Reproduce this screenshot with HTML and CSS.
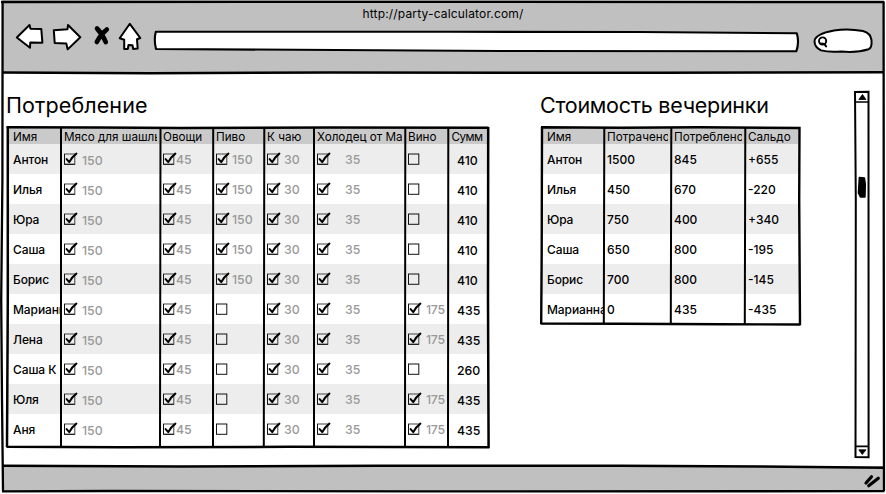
FILE: index.html
```html
<!DOCTYPE html>
<html lang="ru">
<head>
<meta charset="utf-8">
<title>Party calculator</title>
<link rel="stylesheet" href="styles.css">
</head>
<body>
<svg width="0" height="0" class="defs"><defs>
<symbol id="off" viewBox="0 0 15 14"><rect x=".5" y="2" width="10.3" height="10.3" fill="none" stroke="#111" stroke-width="1"/></symbol>
<symbol id="on" viewBox="0 0 15 14"><rect x=".5" y="2" width="10.3" height="10.3" fill="none" stroke="#444" stroke-width="1"/><path d="M.5 2V12.3H10.8" fill="none" stroke="#111"/><path d="M2.6 7.1L5.3 10.1Q8 4.8 12.4 1.6" fill="none" stroke="#000" stroke-width="2" stroke-linecap="round" stroke-linejoin="round"/></symbol>
</defs></svg>
<div class="browser">
  <header class="chrome">
    <div class="url">http://party-calculator.com/</div>
    <div class="toolbar">
      <svg class="nav" width="140" height="32" viewBox="8 20 140 32" fill="#fff" stroke="#000" stroke-width="2" stroke-linejoin="round">
        <path d="M16.8 37.5L29.5 25L30.5 28.8L41.3 29L42.4 42.7L30.3 42.4L30 47.8Z"/>
        <path d="M53.8 30.2L67.5 29.2L68 25L80.3 37.2L67.7 49.4L66.3 43.4L54.7 43Z"/>
        <path d="M129.8 23.8L140.3 38L137 39.3L137.7 48.6L133.2 49L132.5 45.2L128.5 45L127.8 49L124.2 49L124.2 39.7L119.7 38.2Z"/>
        <path d="M97 28.5Q102.5 34 105.8 42.2M106.8 29.5Q100.5 34.5 96.8 42" fill="none" stroke-width="4.6" stroke-linecap="round"/>
      </svg>
      <svg class="address" width="650" height="26" viewBox="150 28 650 26"><path d="M155.8 31.8L450 31.8L640 32L796.8 33.3Q799.5 42 796.3 51.3L500 51L156 49Q153.7 40 155.8 31.8Z" fill="#fff" stroke="#000" stroke-width="2.1" stroke-linejoin="round"/></svg>
      <svg class="search" width="64" height="30" viewBox="811 26 64 30"><path d="M834 30.5Q848 28.2 863 31Q870.5 33 871.5 40Q872.2 48 868.5 49.3Q857 53 841 51.5Q829 52.5 821 50.4Q814.4 47.2 814.5 41Q815.3 34 834 30.5Z" fill="#fff" stroke="#000" stroke-width="2"/><circle cx="822.6" cy="41" r="3.6" fill="none" stroke="#000" stroke-width="1.9"/><path d="M820.3 43.6L824.4 43.9L826.1 46.4" fill="none" stroke="#000" stroke-width="2" stroke-linecap="round"/></svg>
    </div>
  </header>
  <main class="page">
    <section class="consume">
      <h1 class="t1">Потребление</h1>
      <div class="sheet">
        <div class="table use" id="use"></div>
        <svg class="rules" width="488" height="328" viewBox="3 122 488 328" fill="none" stroke="#000" stroke-width="2"><path d="M6.5 127.3L100 127.5L180 128L330 127.4L488.5 127.8" stroke-width="2.5"/><path d="M7.8 127L7.8 300L7 447M488.2 127L488 300L488.6 448M6.5 446.7L120 447.2L290 446.8L489.5 447.2" stroke-width="2.5"/><path d="M61 128L61 447M160.5 128L160 446M213.2 128L213 446M264.3 128L263.8 446M314 128V446M405.3 128L405 447M448.3 128L448 447"/></svg>
      </div>
    </section>
    <section class="cost">
      <h1 class="t2">Стоимость вечеринки</h1>
      <div class="sheet">
        <div class="table pay" id="pay"></div>
        <svg class="rules" width="268" height="206" viewBox="537 122 268 206" fill="none" stroke="#000" stroke-width="2"><path d="M541 127.3L620 127.8L700 127.2L799.5 128L799.2 200L800 325M542 127L541.7 250L541.2 324M540.5 323.6L620 323.8L720 324.2L800.5 324.5" stroke-width="2.4"/><path d="M604.3 128L603.8 323M671.3 128L670.8 323M745.3 128L744.8 324"/></svg>
      </div>
    </section>
    <svg class="scroll" width="18" height="370" viewBox="853 90 18 370" fill="none" stroke="#000" stroke-width="2"><path d="M855 92L868.5 91.8L868.6 457.3L855.5 457L855.8 200Z"/><path d="M855 102H868.5M855.5 446.4H868.5" stroke-width="1.7"/><path d="M862.5 94.5L866 99.5H858.8ZM858.8 449.8H866L862.3 454.5Z" fill="#000" stroke-width=".8"/><path d="M859.3 177.5L864.5 178L865.3 184L865 197L860.4 197L858.4 193Z" fill="#000" stroke-width="1.4" stroke-linejoin="round"/></svg>
  </main>
  <footer class="status"><svg width="20" height="18" viewBox="862 471 20 18" stroke="#000" stroke-width="3.2" stroke-linecap="round"><path d="M866 483L871.5 476.7M868.7 485.8L878.3 478.2"/></svg></footer>
  <svg class="frame" width="886" height="494" viewBox="0 0 886 494" fill="none" stroke="#000" stroke-width="2.3"><path d="M1 2L300 1.8L884.5 2.2M2.6 2L2.4 180L1.2 300L2 400L3 491M883.6 2L883.8 300L884 491M2 491.3L110 491L420 491.4L884.5 491.2"/><path d="M2 72.4L150 73.2L330 72.6L660 72.8L884 72.2" stroke-width="2.5"/><path d="M2 465.7L180 466.6L380 465.7L620 465.7L760 466.5L884 467.8" stroke-width="2.5"/></svg>
</div>
<script src="script.js"></script>
</body>
</html>
```
FILE: styles.css
```css
* { box-sizing: border-box; }
body { margin: 0; background: #fff; color: #000; font-family: Inter, "Open Sans", sans-serif; font-size: 12px; overflow: hidden; }
.defs { position: absolute; }
.browser { position: relative; width: 886px; height: 494px; display: flex; flex-direction: column; }
.chrome { height: 73px; background: #c0c0c0; margin: 0 2px; }
.url { text-align: center; height: 20px; line-height: 20px; padding-top: 4px; font-size: 12px; letter-spacing: .17px; }
.toolbar { display: flex; align-items: flex-start; padding-left: 6px; }
.toolbar svg { flex: none; display: block; }
.address { margin: 8px 0 0 2px; }
.search { margin: 6px 0 0 11px; }
.page { height: 393px; display: flex; align-items: flex-start; }
.consume { width: 534px; padding-left: 7px; }
.cost { width: 319px; padding-left: 7px; }
h1 { margin: 18px 0 0 -1px; height: 37px; line-height: 28px; font-size: 21.5px; font-weight: 400; white-space: nowrap; }
.t1 { letter-spacing: .1px; }
.t2 { letter-spacing: -.28px; }
.sheet { position: relative; }
.rules { position: absolute; left: -4px; top: -6px; }
.table { display: grid; }
.use { width: 481px; grid-template-columns: 54px 99px 53px 51px 50px 91px 43.5px 39.5px; grid-template-rows: 16px repeat(10, 30px); }
.pay { width: 258px; grid-template-columns: 63px 67px 74px 54px; grid-template-rows: 16px repeat(6, 30px); }
.cell { display: flex; align-items: center; overflow: hidden; white-space: nowrap; padding-left: 3px; font-weight: 500; }
.name { padding-left: 6px; letter-spacing: -.1px; }
.head { background: #cacaca; font-size: 11.7px; font-weight: 400; border-right: 3px solid #cacaca; padding-top: 1px; letter-spacing: 0; }
.use .head:nth-child(8) { letter-spacing: -.5px; }
.odd { background: #ededed; }
.check { width: 15px; height: 14px; flex: none; }
.num { color: #999; font-weight: 500; font-size: 12.3px; }
.meat { margin-left: 3px; padding-top: 3px; }
.veg { margin-left: -2px; }
.beer { margin-left: 1px; }
.tea { margin-left: 2px; padding-top: 1px; }
.jelly { margin-left: 13px; }
.wine { margin-left: 3px; letter-spacing: -.3px; }
.total { padding-left: 8.5px; padding-top: 2px; font-size: 12.3px; }
.scroll { margin-top: 17px; margin-left: -7px; position: relative; left: 7px; }
.status { height: 25px; margin: 0 2px; background: #c0c0c0; display: flex; justify-content: flex-end; padding: 5px 2px 0 0; }
.frame { position: absolute; left: 0; top: 0; }
```
FILE: script.js
```js
const people = [
  ['Антон', 1, 0, 410], ['Илья', 1, 0, 410], ['Юра', 1, 0, 410], ['Саша', 1, 0, 410], ['Борис', 1, 0, 410],
  ['Марианна', 0, 1, 435], ['Лена', 0, 1, 435], ['Саша К', 0, 0, 260], ['Юля', 0, 1, 435], ['Аня', 0, 1, 435]
];
const costs = [
  ['Антон', '1500', '845', '+655'], ['Илья', '450', '670', '-220'], ['Юра', '750', '400', '+340'],
  ['Саша', '650', '800', '-195'], ['Борис', '700', '800', '-145'], ['Марианна', '0', '435', '-435']
];
const cell = (cls, body) => `<div class="cell ${cls}">${body}</div>`;
const heads = list => list.map((t, i) => cell('head' + (i ? '' : ' name'), t)).join('');
const item = (on, kind, price) => `<svg class="check"><use href="#${on ? 'on' : 'off'}"/></svg>` + (on ? `<span class="num ${kind}">${price}</span>` : '');
document.getElementById('use').innerHTML =
  heads(['Имя', 'Мясо для шашлыка', 'Овощи', 'Пиво', 'К чаю', 'Холодец от Марианны', 'Вино', 'Сумм']) +
  people.map(([name, beer, wine, sum], i) => {
    const odd = i % 2 ? '' : ' odd';
    return cell('name' + odd, name) + cell(odd, item(1, 'meat', 150)) + cell(odd, item(1, 'veg', 45)) +
      cell(odd, item(beer, 'beer', 150)) + cell(odd, item(1, 'tea', 30)) + cell(odd, item(1, 'jelly', 35)) +
      cell(odd, item(wine, 'wine', 175)) + cell('total' + odd, sum);
  }).join('');
document.getElementById('pay').innerHTML =
  heads(['Имя', 'Потрачено', 'Потреблено', 'Сальдо']) +
  costs.map((row, i) => row.map((t, j) => cell((j ? '' : 'name') + (i % 2 ? '' : ' odd'), t)).join('')).join('');
```
